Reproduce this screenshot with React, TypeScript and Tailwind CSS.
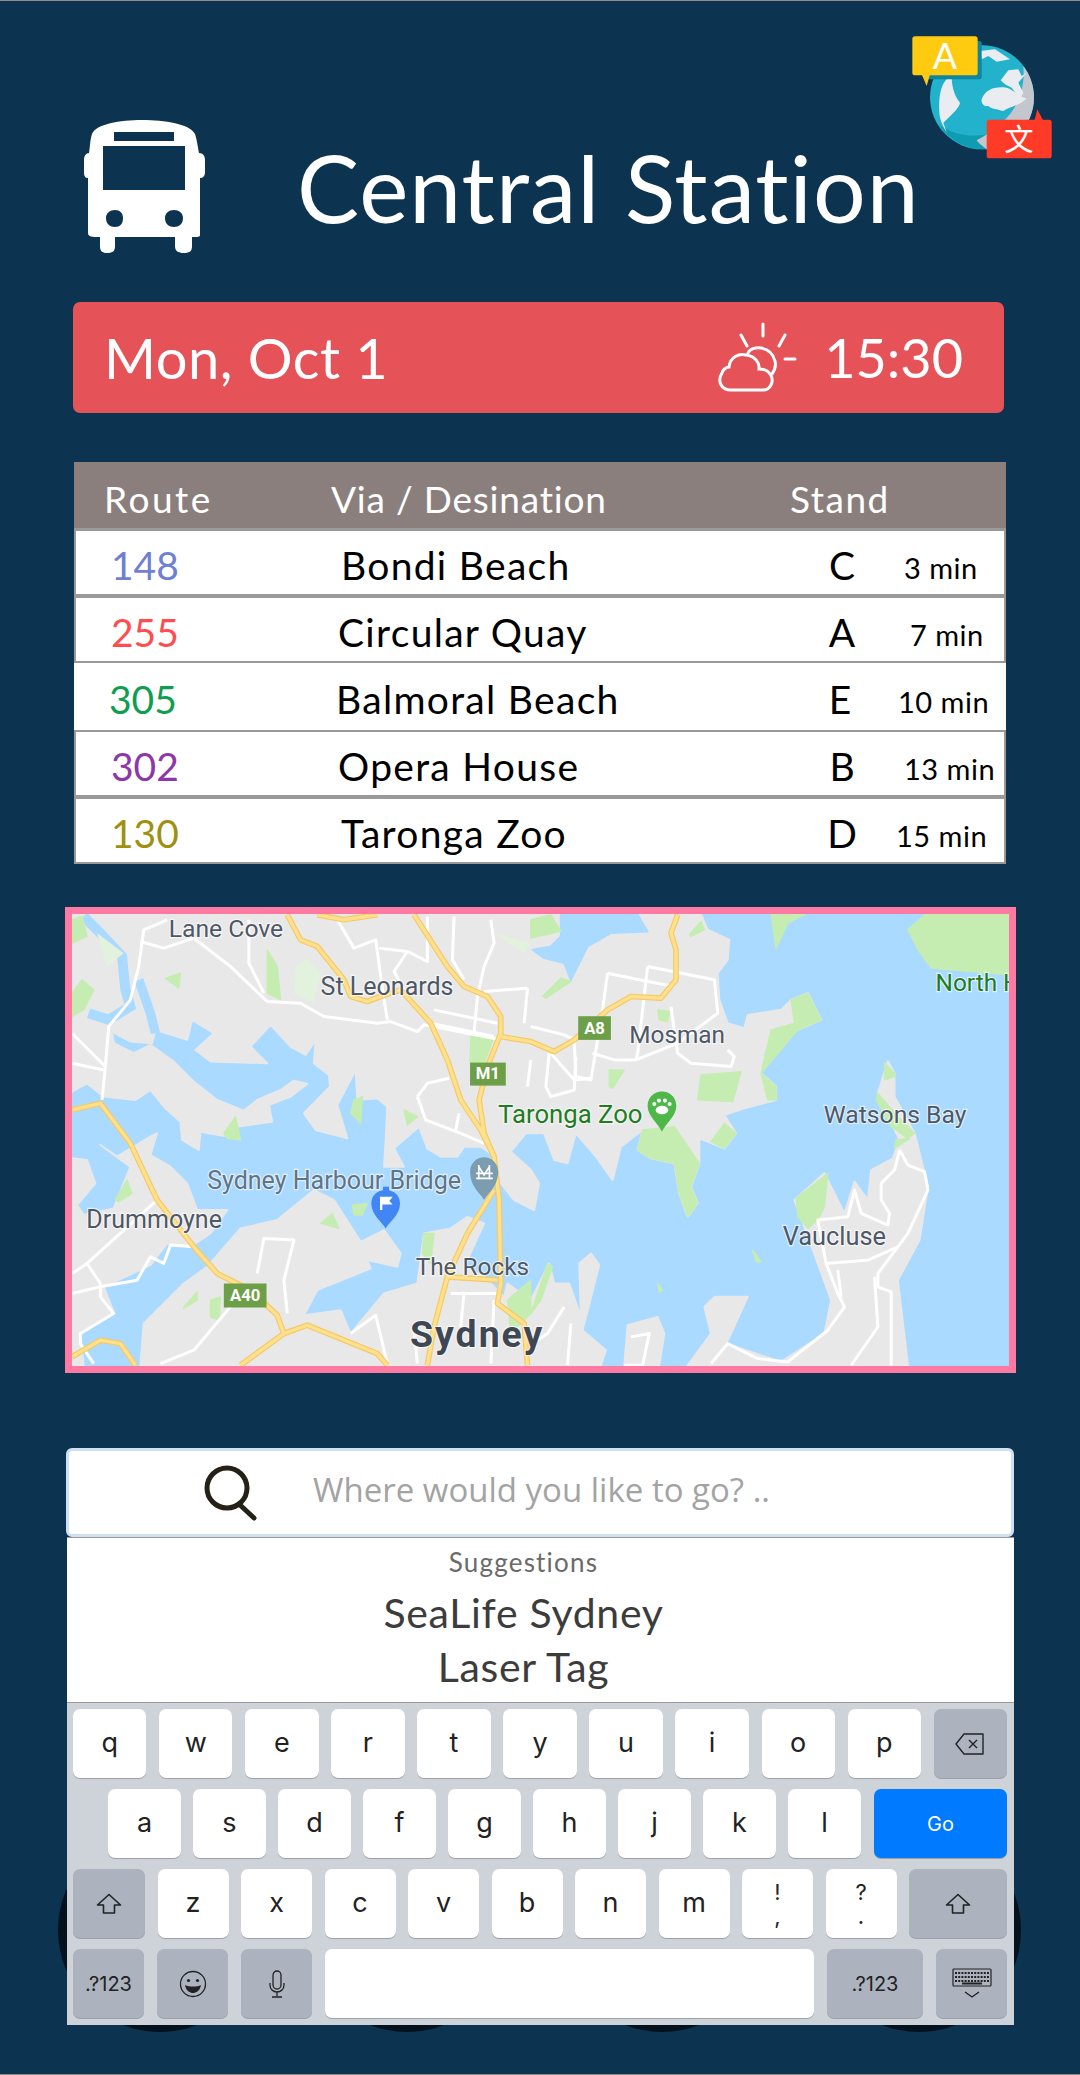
import React from 'react';

const land = [
  '65,45 1950,45 1970,90 2035,120 2030,180 2000,220 2005,300 2030,370 2080,385 2090,345 2190,330 2220,300 2270,280 2310,360 2240,390 2180,420 2140,450 2130,520 2175,560 2175,600 2080,625 2020,645 2055,700 2020,745 1945,715 1945,790 1920,860 1940,910 1910,950 1885,880 1870,790 1800,775 1760,750 1775,690 1710,740 1685,840 1635,770 1575,700 1550,790 1510,780 1480,700 1425,700 1380,755 1440,810 1465,850 1450,930 1390,900 1350,850 1340,790 1320,760 1290,740 1240,740 1220,770 1170,770 1130,745 1105,680 1030,745 1060,800 1000,800 1005,720 1010,620 980,595 920,600 915,510 860,615 890,715 795,690 760,640 838,560 835,525 790,490 795,420 765,465 720,440 660,375 600,440 650,490 480,485 435,450 490,400 425,360 410,420 315,390 305,430 240,425 185,395 190,430 250,460 300,435 370,485 430,545 500,600 580,632 620,600 690,570 730,542 770,552 720,590 655,615 665,665 558,680 520,708 450,695 445,750 395,720 390,665 345,625 300,570 255,600 160,590 110,550 65,575',
  '65,775 110,780 135,850 80,915 100,945 190,925 240,800 150,735 200,770 300,710 320,700 300,765 360,800 410,850 440,930 530,930 480,1000 420,1040 350,1030 300,1095 160,1160 190,1235 90,1300 100,1395 65,1395',
  '270,1395 280,1270 400,1150 470,1100 570,985 680,960 790,870 850,900 930,1025 1000,990 1050,1060 1040,1100 950,1080 960,1105 800,1170 760,1245 870,1230 900,1300 1000,1180 1100,1150 1120,1000 1200,985 1250,950 1300,970 1240,1100 1300,1130 1360,1190 1370,1150 1440,1200 1495,1090 1510,1150 1555,1150 1590,1250 1585,1090 1620,1060 1645,1095 1595,1290 1665,1350 1650,1395',
  '1720,1395 1730,1275 1820,1250 1840,1300 1825,1395',
  '1910,1395 1980,1300 1960,1220 1990,1190 2090,1190 2040,1300 2025,1330 2190,1385 2320,1300 2340,1200 2300,1090 2230,900 2320,820 2380,940 2410,845 2450,900 2460,810 2525,775 2545,720 2480,580 2510,485 2530,520 2530,590 2590,700 2630,860 2605,1020 2540,1140 2570,1395',
];

const water = ['1445,150 1500,140 1530,110 1530,45 1760,45 1790,95 1680,100 1610,140 1560,240 1540,190 1480,175'];

const parks = [
  '65,60 95,50 110,110 65,130', '65,280 95,240 130,270 100,330 65,350', '345,235 390,220 385,265', '650,150 680,200 690,300 650,280',
  '1260,410 1330,410 1300,490 1258,490', '910,600 935,590 930,670 900,640', '520,700 555,650 570,720 530,715', '1060,630 1100,650 1070,675',
  '195,900 230,840 245,880 205,905', '905,915 950,910 935,945 910,945', '810,970 845,940 865,985 830,975', '400,1220 440,1175 440,1200 400,1225',
  '480,1200 510,1190 505,1260 480,1250', '1120,1000 1150,1000 1140,1090 1115,1060', '1370,1200 1440,1140 1440,1240 1380,1300', '1490,1090 1505,1100 1470,1200 1440,1240',
  '1775,690 1870,680 1945,790 1920,860 1940,910 1910,950 1885,880 1870,790 1800,775 1760,750', '2240,390 2310,360 2270,280 2220,300 2230,370 2160,390 2130,520 2175,560 2175,600 2150,600 2130,520',
  '1940,600 1950,525 2070,515 2045,605', '2055,700 2020,745 1980,725 2020,670', '2500,490 2530,520 2530,530 2500,540', '2480,580 2540,650 2590,700 2570,715 2520,680 2475,600',
  '2535,720 2575,715 2530,745', '2235,895 2330,820 2320,920 2300,960 2270,985 2240,950', '2160,45 2260,45 2210,70 2175,145', '1915,105 1950,65 1960,90 1920,110',
  '1820,330 1855,335 1850,365 1825,360', '1675,510 1720,510 1685,565 1675,560', '1475,290 1530,235 1560,245 1485,295', '2105,1050 2130,1085 2115,1085', '1820,1150 1835,1170 1825,1175',
  '2620,45 2570,90 2600,150 2640,205 2875,225 2875,45', '1440,60 1500,45 1530,95 1440,115',
];

const softParks = ['735,200 770,175 810,220 790,310 730,280', '2720,110 2740,60 2870,60 2830,190', '1330,100 1440,130 1420,160', '140,100 220,160 170,200'];

const roads = [
  '350,60 280,90 265,200 240,300 175,380 165,500 155,600', '270,125 340,145 430,115 540,200 650,305 750,310 820,350 980,370 1020,365 1100,395 1120,375 1350,420', '595,60 595,190 640,280',
  '65,400 165,500', '65,490 160,510', '860,60 910,145 975,120 1000,300 1010,360', '985,145 1070,155 1130,185 1130,50', '1070,155 1030,215 1060,270', '1210,50 1205,180 1240,240',
  '1320,60 1330,130 1300,200 1280,290 1270,400', '1150,330 1340,370', '1140,370 1330,410', '1100,590 1130,550 1195,535', '1100,590 1125,660 1230,700 1300,730', '1225,640 1215,690',
  '1430,265 1420,370', '1430,265 1300,275', '65,1120 110,1090 320,900', '110,1090 150,1150 150,1190 190,1240 90,1300 90,1330 130,1390', '65,1180 150,1160 260,1140 300,1070 340,1090 360,1035 430,1040',
  '330,1390 430,1350 540,1220', '620,1120 640,1015 730,1020 700,1140 710,1240', '900,1300 975,1245 1010,1390', '1100,1390 1090,1290', '1200,1180 1340,1180', '1240,1175 1230,1280', '1330,1200 1320,1390',
  '1670,220 1655,330 1620,540 1580,530', '1670,220 1790,245 1870,260', '1790,200 1990,240 2000,340 1880,430 1755,480 1690,480 1625,460', '1790,200 1760,460 1755,480', '1860,320 1880,460 1920,490 2040,500 2050,470 2030,450',
  '1440,380 1540,405 1570,420 1575,540 1620,535', '1495,460 1485,560 1500,590 1570,570 1575,470', '1500,460 1570,540', '1440,480 1430,560',
  '2545,750 2570,795 2620,815 2630,870 2570,1000 2540,1040 2480,1120 2480,1160 2520,1175 2520,1395', '2545,750 2530,810 2490,850 2490,900 2515,940 2510,975 2430,940 2410,870 2390,950 2300,960 2325,1090 2360,1180 2380,1220 2330,1290 2210,1385 2120,1375 2030,1330 1980,1390',
  '2470,1130 2480,1280 2400,1395', '2325,1090 2390,1085 2450,1080 2540,1040', '2360,1110 2370,1190', '1540,1220 1490,1300 1460,1320', '1560,1270 1550,1395', '1740,1310 1795,1300 1775,1395 1720,1395',
];

const highways = [
  '710,45 750,120 800,140 880,240 900,290 950,305 990,290 1050,270 1140,370 1190,480 1230,600 1290,690 1330,770 1345,900 1350,1150 1340,1210 1420,1270 1430,1395',
  '1090,45 1190,200 1240,260 1310,290 1350,350 1350,400 1310,500 1285,600 1300,700 1330,770',
  '1350,410 1440,425 1510,455 1570,420 1670,330 1740,290 1830,295 1875,240 1875,150 1860,100 1880,45',
  '1330,870 1250,1000 1190,1130 1150,1280 1130,1395',
  '65,630 150,610 240,730 320,900 430,1040 500,1120 600,1170 680,1245 700,1300 770,1275 980,1360 1010,1395',
  '65,1370 150,1320 210,1330 255,1395', '700,1300 570,1395', '800,45 880,60 980,45', '1190,1130 1340,1140',
];

const labels: { text: string; x: number; y: number; size: number; color: string; weight?: number; spacing?: number }[] = [
  { text: 'Lane Cove', x: 355, y: 112, size: 74, color: '#4f5866' },
  { text: 'St Leonards', x: 810, y: 285, size: 75, color: '#4f5866' },
  { text: 'Sydney Harbour Bridge', x: 470, y: 868, size: 75, color: '#5f7488' },
  { text: 'Drummoyne', x: 108, y: 985, size: 75, color: '#4f5866' },
  { text: 'The Rocks', x: 1095, y: 1125, size: 73, color: '#4f5866' },
  { text: 'Sydney', x: 1078, y: 1340, size: 112, color: '#3f4754', weight: 700, spacing: 6 },
  { text: 'Taronga Zoo', x: 1342, y: 668, size: 77, color: '#1e7d23' },
  { text: 'Mosman', x: 1735, y: 428, size: 73, color: '#4f5866' },
  { text: 'Watsons Bay', x: 2318, y: 670, size: 74, color: '#4f5866' },
  { text: 'Vaucluse', x: 2195, y: 1035, size: 76, color: '#4f5866' },
  { text: 'North H', x: 2653, y: 275, size: 73, color: '#1e7d23' },
];

function MapView() {
  return (
    <svg viewBox="65 45 2808 1350" className="block w-full h-full">
      <rect x="65" y="45" width="2808" height="1350" fill="#aadaff" />
      {land.map((p) => <polygon key={p} points={p} fill="#e8e8e8" stroke="#e8e8e8" strokeWidth="6" strokeLinejoin="round" />)}
      {water.map((p) => <polygon key={p} points={p} fill="#aadaff" stroke="#aadaff" strokeWidth="6" strokeLinejoin="round" />)}
      <polyline points="100,50 150,100 215,170 225,270 240,320 175,360 115,340" fill="none" stroke="#aadaff" strokeWidth="30" />
      <polyline points="265,240 300,340 315,400" fill="none" stroke="#aadaff" strokeWidth="28" />
      {softParks.map((p) => <polygon key={p} points={p} fill="#e2f2dc" />)}
      {parks.map((p) => <polygon key={p} points={p} fill="#c5edb1" stroke="#c5edb1" strokeWidth="4" strokeLinejoin="round" />)}
      {roads.map((p) => <polyline key={p} points={p} fill="none" stroke="#ffffff" strokeWidth="9" strokeLinejoin="round" />)}
      {highways.map((p) => <polyline key={p} points={p} fill="none" stroke="#f5c963" strokeWidth="17" strokeLinejoin="round" />)}
      {highways.map((p) => <polyline key={p} points={p} fill="none" stroke="#fee08f" strokeWidth="10" strokeLinejoin="round" />)}
      <rect x="1258" y="488" width="107" height="69" fill="#6d9f48" />
      <text x="1311" y="538" textAnchor="middle" fontSize="50" fontWeight="700" fill="#fff" fontFamily="Roboto, sans-serif">M1</text>
      <rect x="520" y="1150" width="128" height="72" fill="#6d9f48" />
      <text x="584" y="1204" textAnchor="middle" fontSize="50" fontWeight="700" fill="#fff" fontFamily="Roboto, sans-serif">A40</text>
      <rect x="1582" y="349" width="98" height="71" fill="#6d9f48" />
      <text x="1631" y="402" textAnchor="middle" fontSize="50" fontWeight="700" fill="#fff" fontFamily="Roboto, sans-serif">A8</text>
      {labels.map((l) => (
        <text key={l.text} x={l.x} y={l.y} fontSize={l.size} fontWeight={l.weight ?? 400} letterSpacing={l.spacing ?? 0} fill={l.color} stroke="#ffffff" strokeOpacity="0.65" strokeWidth="7" paintOrder="stroke" fontFamily="Roboto, sans-serif">{l.text}</text>
      ))}
      {/* blue flag pin */}
      <path d="M1005,985 C995,965 962,945 962,910 C962,885 982,870 1005,870 C1028,870 1048,885 1048,910 C1048,945 1015,965 1005,985 Z" fill="#4285f4" />
      <rect x="997" y="860" width="18" height="18" fill="#4285f4" />
      <path d="M988,890 H1026 L1016,903 L1026,913 H995 V930 H988 Z" fill="#fff" />
      {/* bridge pin */}
      <path d="M1300,900 C1290,880 1258,860 1258,815 C1258,790 1278,772 1300,772 C1322,772 1342,790 1342,815 C1342,860 1310,880 1300,900 Z" fill="#7c9cb0" />
      <path d="M1276,835 H1326 M1284,795 V838 M1316,795 V838 M1284,800 L1300,825 L1316,800 M1276,820 H1326" stroke="#fff" strokeWidth="5" fill="none" />
      {/* zoo pin */}
      <path d="M1833,695 C1823,670 1790,650 1790,618 C1790,592 1810,575 1833,575 C1856,575 1876,592 1876,618 C1876,650 1843,670 1833,695 Z" fill="#4db848" />
      <ellipse cx="1833" cy="630" rx="19" ry="13" fill="#fff" />
      <circle cx="1810" cy="612" r="6" fill="#fff" />
      <circle cx="1824" cy="602" r="6" fill="#fff" />
      <circle cx="1842" cy="602" r="6" fill="#fff" />
      <circle cx="1856" cy="612" r="6" fill="#fff" />
    </svg>
  );
}

function BusIcon() {
  return (
    <svg viewBox="84 120 121 133" className="w-[121px] h-[133px] block">
      <path fillRule="evenodd" fill="#ffffff" d="M142 120 C165 120 190 124 195 134 C197 140 198 148 199 153 C203 153 205 156 205 160 V172 C205 176 203 178 200 178 V235 C200 237 198 237 192 237 V246 C192 251 190 253 184 253 C178 253 175 251 175 246 V237 H115 V246 C115 251 113 253 107 253 C102 253 100 251 100 246 V237 C92 237 88 237 88 233 V178 C85 178 84 176 84 172 V160 C84 156 86 153 89 153 C90 148 90 140 92 134 C96 124 120 120 142 120 Z M114 132 V141 H174 V132 Z M103 146 V190 H185 V146 Z M115 210 C110 210 106 213 106 218 C106 224 110 227 115 227 C120 227 123 224 123 218 C123 213 120 210 115 210 Z M174 210 C169 210 165 213 165 218 C165 224 169 227 174 227 C179 227 183 224 183 218 C183 213 179 210 174 210 Z" />
    </svg>
  );
}

function GlobeIcon() {
  return (
    <svg viewBox="0 0 600 480" className="absolute left-[880px] top-[20px] w-[200px] h-[160px]">
      <circle cx="306" cy="229" r="156" fill="#22b2cb" />
      <path d="M178,312 A156,156 0 0,0 330,383 L325,340 C270,350 220,340 178,312 Z" fill="#0e9cb3" />
      <path d="M430,135 A156,156 0 0,1 320,385 C300,370 290,360 290,358 C360,320 440,260 430,135 Z" fill="#c3c6cc" />
      <path d="M215,165 C175,180 175,250 180,290 C185,310 195,325 200,335 L190,305 C205,290 240,260 240,245 C220,220 215,190 215,165 Z" fill="#e9ecf0" />
      <path d="M305,235 C315,205 345,195 380,200 C400,205 420,230 440,232 C420,255 390,255 370,270 C350,265 330,262 325,255 C310,258 303,245 305,235 Z" fill="#e9ecf0" />
      <path d="M362,178 L385,148 L415,145 L425,165 L440,155 L415,185 L430,215 L420,235 L395,200 L375,190 Z" fill="#e9ecf0" />
      <path d="M300,90 L345,85 L390,115 L350,122 L325,105 L305,115 Z" fill="#e9ecf0" />
      <rect x="140" y="60" width="165" height="115" rx="6" fill="#0e86a0" />
      <path d="M125,160 L140,195 L150,160 Z" fill="#ffcb10" />
      <rect x="97" y="46" width="196" height="117" rx="8" fill="#ffcb10" />
      <text x="195" y="145" textAnchor="middle" fontSize="108" fill="#fff" fontFamily="Lato, sans-serif">A</text>
      <path d="M463,300 L472,265 L490,300 Z" fill="#ff3b28" />
      <rect x="320" y="296" width="195" height="116" rx="8" fill="#ff3b28" />
      <text x="417" y="388" textAnchor="middle" fontSize="88" fill="#fff" fontFamily="'Noto Sans CJK SC', sans-serif">文</text>
    </svg>
  );
}

function WeatherIcon() {
  return (
    <svg viewBox="718 319 82 72" className="w-[82px] h-[72px] block" fill="none" stroke="#ffffff" strokeWidth="3" strokeLinecap="round">
      <path d="M764 321 V333 M742 332 L748 343 M786 332 L780 343 M786 356 H796" />
      <path d="M749 350 C752 342 772 342 776 358 C777 362 776 367 773 371" />
      <path d="M732 387 C722 387 718 378 723 370 C724 366 728 364 730 364 C731 354 740 350 747 352 C756 353 761 360 760 366 C772 366 775 376 772 382 C770 386 767 387 764 387 Z" />
    </svg>
  );
}

type Row = { route: string; color: string; dest: string; stand: string; min: string; frame: string; destPad: string; minPad: string };

const rows: Row[] = [
  { route: '148', color: 'text-[#6f7fd6]', dest: 'Bondi Beach', stand: 'C', min: '3 min', frame: 'h-[67px] border-x-2 border-b-[4px]', destPad: 'pl-[3px]', minPad: 'pl-[32px]' },
  { route: '255', color: 'text-[#ff4c4f]', dest: 'Circular Quay', stand: 'A', min: '7 min', frame: 'h-[65px] border-x-2 border-b-[2px]', destPad: 'pl-0', minPad: 'pl-[38px]' },
  { route: '305', color: 'text-[#0f9d4f]', dest: 'Balmoral Beach', stand: 'E', min: '10 min', frame: 'h-[69px] border-b-[2px]', destPad: 'pl-0', minPad: 'pl-[28px]' },
  { route: '302', color: 'text-[#8e37a8]', dest: 'Opera House', stand: 'B', min: '13 min', frame: 'h-[67px] border-x-2 border-b-[4px]', destPad: 'pl-0', minPad: 'pl-[32px]' },
  { route: '130', color: 'text-[#a0900f]', dest: 'Taronga Zoo', stand: 'D', min: '15 min', frame: 'h-[65px] border-x-2 border-b-[2px]', destPad: 'pl-[3px]', minPad: 'pl-[24px]' },
];

const keyBase = 'flex items-center justify-center h-[69px] rounded-[7px] text-[27px] text-[#222] shadow-[0_1px_0_#9ca1a9]';
const white = `${keyBase} bg-white`;
const dark = `${keyBase} bg-[#adb3be]`;

function ShiftIcon() {
  return (
    <svg viewBox="0 0 26 22" className="w-[26px] h-[22px]" fill="none" stroke="#222" strokeWidth="1.6" strokeLinejoin="round">
      <path d="M13 1.5 L24.5 12 H18.5 V20 H7.5 V12 H1.5 Z" />
    </svg>
  );
}

function DeleteIcon() {
  return (
    <svg viewBox="0 0 30 22" className="w-[30px] h-[22px]" fill="none" stroke="#222" strokeWidth="1.4" strokeLinejoin="round">
      <path d="M9 1 H28 V21 H9 L1 11 Z" />
      <path d="M14 7 L22 15 M22 7 L14 15" />
    </svg>
  );
}

function EmojiIcon() {
  return (
    <svg viewBox="0 0 28 28" className="w-[28px] h-[28px]" fill="none" stroke="#222" strokeWidth="1.3">
      <circle cx="14" cy="14" r="12.5" />
      <circle cx="9.5" cy="10.5" r="1.6" fill="#222" stroke="none" />
      <circle cx="18.5" cy="10.5" r="1.6" fill="#222" stroke="none" />
      <path d="M6 15 C10 17 18 17 22 15 C21 21 17 23 14 23 C11 23 7 21 6 15 Z" fill="#222" stroke="none" />
    </svg>
  );
}

function MicIcon() {
  return (
    <svg viewBox="0 0 16 28" className="w-[16px] h-[28px]" fill="none" stroke="#222" strokeWidth="1.3">
      <rect x="4" y="1" width="8" height="18" rx="4" />
      <path d="M1 13 V15 C1 19 4 22 8 22 C12 22 15 19 15 15 V13 M8 22 V26 M3 27 H13" />
    </svg>
  );
}

function KeyboardIcon() {
  return (
    <svg viewBox="0 0 40 32" className="w-[40px] h-[32px]" fill="none" stroke="#222" strokeWidth="1.2">
      <rect x="1" y="1" width="38" height="17" rx="1" />
      <path d="M3 5 H37 M3 9 H37 M3 13 H37" strokeWidth="2" strokeDasharray="2 1.2" />
      <path d="M10 15.5 H30" strokeWidth="2" />
      <path d="M13 24 L20 29 L27 24" strokeWidth="1.4" />
    </svg>
  );
}

export default function App() {
  return (
    <div className="relative w-[1080px] h-[2075px] overflow-hidden bg-[#0c3350] border-y border-[#8c8c8c] font-['Lato',sans-serif]">
      <GlobeIcon />
      {/* backdrop circles, they peek out from behind the keyboard */}
      <div className="absolute left-[58px] top-[1827px] w-[204px] h-[204px] rounded-full bg-[#04121f]" />
      <div className="absolute left-[305px] top-[1827px] w-[204px] h-[204px] rounded-full bg-[#04121f]" />
      <div className="absolute left-[560px] top-[1827px] w-[204px] h-[204px] rounded-full bg-[#04121f]" />
      <div className="absolute left-[817px] top-[1827px] w-[204px] h-[204px] rounded-full bg-[#04121f]" />

      <div className="relative flex flex-col">
        <header className="flex items-start h-[301px] pl-[84px] pt-[119px]">
          <BusIcon />
          <h1 className="ml-[92px] mt-[7px] text-[93px] leading-[120px] tracking-[1px] font-normal text-white">Central Station</h1>
        </header>

        <div className="flex items-center justify-between ml-[73px] w-[931px] h-[111px] rounded-[7px] bg-[#e55257] pl-[31px] pr-[41px] text-white">
          <span className="text-[56px] leading-none tracking-[0.5px]">Mon, Oct 1</span>
          <div className="flex items-center gap-[25px]">
            <WeatherIcon />
            <span className="text-[54px] leading-none">15:30</span>
          </div>
        </div>

        <div className="ml-[74px] mt-[49px] w-[932px] text-[39px]">
          <div className="flex items-center h-[69px] pt-[7px] bg-[#8a7f7d] border-b-[3px] border-[#999] text-white text-[37px]">
            <span className="w-[257px] pl-[30px] tracking-[2.5px]">Route</span>
            <span className="w-[459px] tracking-[0.8px]">Via / Desination</span>
            <span className="tracking-[1.5px]">Stand</span>
          </div>
          {rows.map((r) => (
            <div key={r.route} className={`flex items-center pt-[5px] bg-white border-[#999] text-black ${r.frame}`}>
              <span className={`w-[262px] pl-[35px] ${r.color}`}>{r.route}</span>
              <span className={`w-[474px] tracking-[1.3px] ${r.destPad}`}>{r.dest}</span>
              <span className="w-[60px] text-center">{r.stand}</span>
              <span className={`text-[29px] tracking-[0.5px] pt-[6px] ${r.minPad}`}>{r.min}</span>
            </div>
          ))}
        </div>

        <div className="ml-[65px] mt-[43px] w-[951px] h-[466px] border-[7px] border-[#ff7aa2] bg-[#aadaff]">
          <MapView />
        </div>

        <div className="flex items-center ml-[66px] mt-[75px] w-[948px] h-[89px] rounded-[6px] bg-white border-[3px] border-[#cfe0f3]">
          <svg viewBox="0 0 56 56" className="ml-[134px] w-[56px] h-[56px]" fill="none" stroke="#262016" strokeWidth="5" strokeLinecap="round">
            <circle cx="24" cy="23" r="20" />
            <path d="M36 39 L51 53" />
          </svg>
          <span className="ml-[54px] mt-[-6px] font-['Open_Sans',sans-serif] text-[33px] text-[#a3a3a3]">Where would you like to go? ..</span>
        </div>

        <div className="flex flex-col items-center ml-[67px] w-[947px] h-[166px] pr-[34px] bg-white border-y border-[#9a9a9a]">
          <span className="mt-[8px] text-[26px] leading-[32px] tracking-[1.2px] text-[#6a6a6a]">Suggestions</span>
          <span className="mt-[8px] text-[41px] leading-[54px] tracking-[0.7px] text-[#3c3c3c]">SeaLife Sydney</span>
          <span className="text-[41px] leading-[54px] tracking-[0.7px] text-[#3c3c3c]">Laser Tag</span>
        </div>

        <div className="flex flex-col gap-[11px] ml-[67px] w-[947px] h-[322px] bg-[#ced3da] pl-[6px] pr-[7px] pt-[6px] font-['Inter',sans-serif]">
          <div className="grid grid-cols-11 gap-[12.7px]">
            {['q', 'w', 'e', 'r', 't', 'y', 'u', 'i', 'o', 'p'].map((k) => <div key={k} className={white}>{k}</div>)}
            <div className={dark}><DeleteIcon /></div>
          </div>
          <div className="flex gap-[12px] pl-[35px]">
            {['a', 's', 'd', 'f', 'g', 'h', 'j', 'k', 'l'].map((k) => <div key={k} className={`${white} w-[73px]`}>{k}</div>)}
            <div className={`${keyBase} flex-1 bg-[#007aff] ml-px !text-white !text-[20px]`}>Go</div>
          </div>
          <div className="flex gap-[12.5px]">
            <div className={`${dark} w-[72px]`}><ShiftIcon /></div>
            {['z', 'x', 'c', 'v', 'b', 'n', 'm'].map((k) => <div key={k} className={`${white} w-[71px]`}>{k}</div>)}
            <div className={`${white} w-[71px] flex-col !text-[22px] leading-[24px]`}><span>!</span><span>,</span></div>
            <div className={`${white} w-[71px] flex-col !text-[22px] leading-[24px]`}><span>?</span><span>.</span></div>
            <div className={`${dark} flex-1`}><ShiftIcon /></div>
          </div>
          <div className="flex gap-[13px]">
            <div className={`${dark} w-[71px] !text-[20px]`}>.?123</div>
            <div className={`${dark} w-[71px]`}><EmojiIcon /></div>
            <div className={`${dark} w-[71px]`}><MicIcon /></div>
            <div className={`${white} w-[489px]`} />
            <div className={`${dark} w-[96px] !text-[20px]`}>.?123</div>
            <div className={`${dark} flex-1`}><KeyboardIcon /></div>
          </div>
        </div>
      </div>
    </div>
  );
}
